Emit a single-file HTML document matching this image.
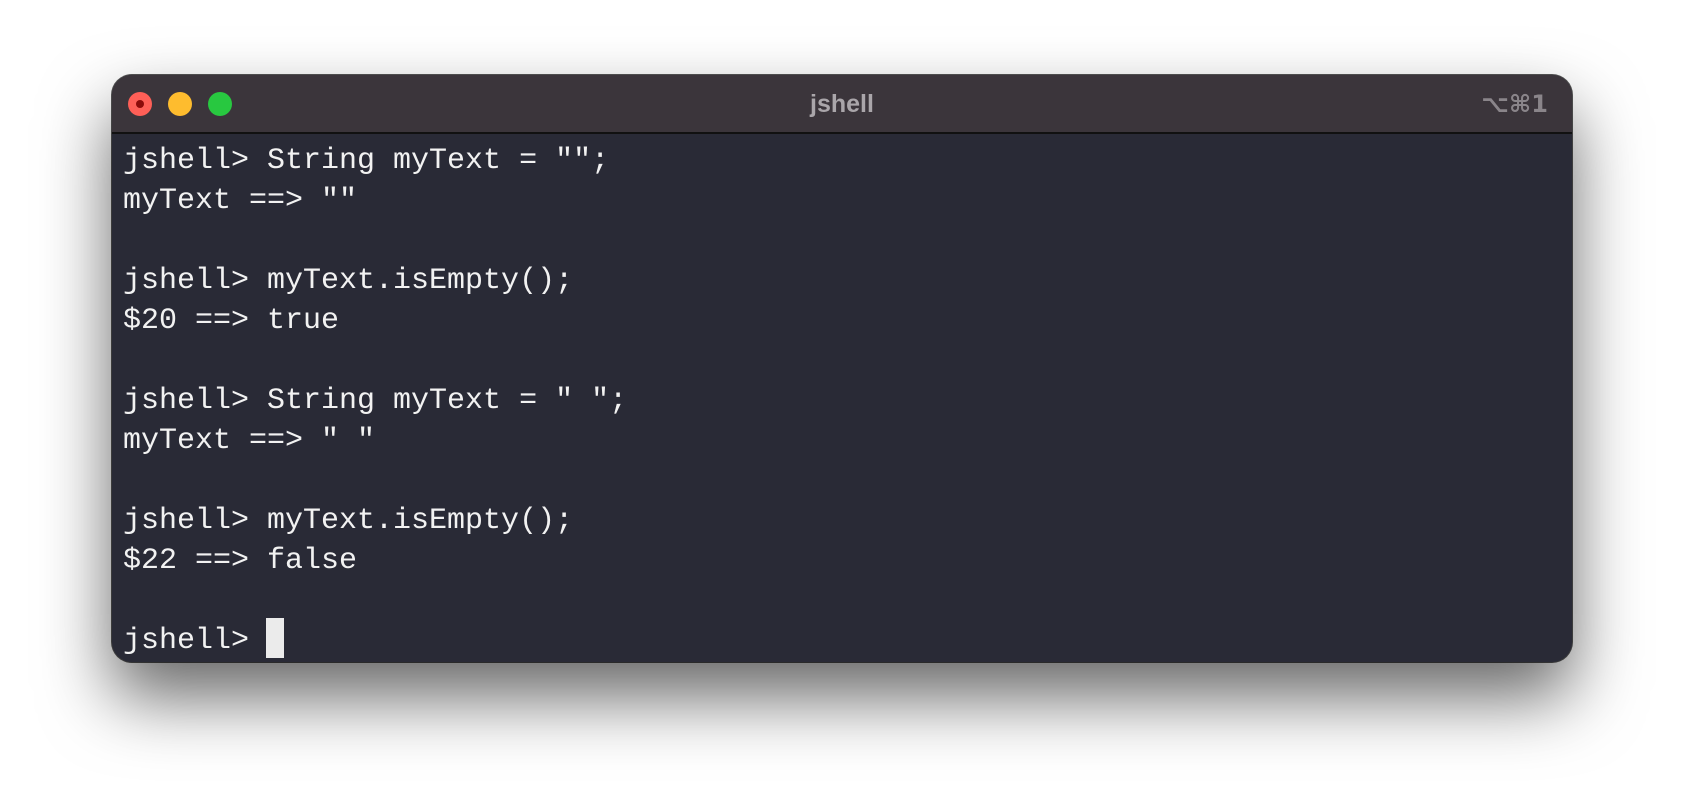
<!DOCTYPE html>
<html><head><style>
html,body{margin:0;padding:0;width:1684px;height:810px;background:#fff;overflow:hidden}
.win{position:absolute;left:112px;top:75px;width:1460px;height:587px;border-radius:20px;background:#292a36;box-shadow:0 35px 70px rgba(0,0,0,.6),0 0 0 1px #555;overflow:hidden}
.tb{position:absolute;left:0;top:0;right:0;height:57px;background:#3b353b;border-bottom:2px solid #111}
.dot{position:absolute;top:17px;width:24px;height:24px;border-radius:50%}
.title{position:absolute;left:0;right:0;top:15px;text-align:center;font:bold 25px "Liberation Sans",sans-serif;color:#aaa6aa}
.sc{position:absolute;right:24px;top:15px;font:bold 24px "DejaVu Sans",sans-serif;color:#8a858a}
pre{position:absolute;left:11px;top:66px;margin:0;font:30px/40px "Liberation Mono",monospace;color:#f2f2f2;letter-spacing:0}
.cur{position:absolute;left:154px;top:543px;width:18px;height:40px;background:#ebebeb}
</style></head><body>
<div class="win">
<div class="tb">
<div class="dot" style="left:16px;background:#fe5f57"><div style="position:absolute;left:8px;top:8px;width:8px;height:8px;border-radius:50%;background:#8c0b0a"></div></div>
<div class="dot" style="left:56px;background:#febc2e"></div>
<div class="dot" style="left:96px;background:#28c840"></div>
<div class="title">jshell</div>
<div class="sc">⌥⌘1</div>
</div>
<pre>jshell&gt; String myText = "";
myText ==&gt; ""

jshell&gt; myText.isEmpty();
$20 ==&gt; true

jshell&gt; String myText = " ";
myText ==&gt; " "

jshell&gt; myText.isEmpty();
$22 ==&gt; false

jshell&gt; </pre>
<div class="cur"></div>
</div>
</body></html>
